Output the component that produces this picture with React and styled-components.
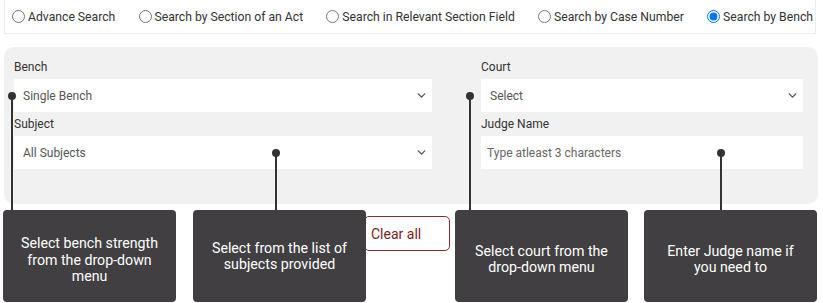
import React from "react";
import styled, { createGlobalStyle } from "styled-components";
import { ChevronDown } from "lucide-react";

const GlobalStyle = createGlobalStyle`
  body {
    margin: 0;
    background: #ffffff;
    font-family: Roboto, "Liberation Sans", sans-serif;
  }
`;

const Page = styled.div`
  position: relative;
  width: 823px;
  height: 303px;
  overflow: hidden;
`;

const RadioBar = styled.div`
  display: flex;
  justify-content: space-between;
  align-items: center;
  height: 33px;
  margin: 0 7px 0 4px;
  padding: 0 2px 0 7px;
  border: 1px solid #ececec;
  border-top: none;
`;

const RadioLabel = styled.label`
  display: flex;
  align-items: center;
  font-size: 12.2px;
  color: #333333;
  white-space: nowrap;
`;

const Radio = styled.input`
  width: 13px;
  height: 13px;
  margin: 0 3px 0 0;
`;

const Panel = styled.div`
  display: grid;
  grid-template-columns: 418px 322px;
  column-gap: 49px;
  row-gap: 5px;
  margin: 13px 5px 0 4px;
  padding: 13px 15px 35px 10px;
  background: #f1f1f1;
  border-radius: 10px;
`;

const Field = styled.div`
  display: flex;
  flex-direction: column;
  gap: 5px;
`;

const Label = styled.div`
  font-size: 12px;
  line-height: 14px;
  color: #333333;
`;

const SelectBox = styled.div`
  display: flex;
  align-items: center;
  justify-content: space-between;
  height: 33px;
  padding: 0 4px 0 9px;
  background: #ffffff;
  font-size: 12px;
  color: #555555;

  svg {
    color: #555555;
  }
`;

const TextBox = styled.div`
  display: flex;
  align-items: center;
  height: 33px;
  padding: 0 6px;
  background: #ffffff;
  font-size: 12px;
  color: #666666;
`;

const ButtonRow = styled.div`
  display: flex;
  margin-top: 12px;
  padding-left: 364px;
`;

const ClearButton = styled.button`
  width: 86px;
  height: 35px;
  padding: 0 0 0 6px;
  text-align: left;
  background: #ffffff;
  border: 1px solid #8b2a2a;
  border-radius: 5px;
  font-family: Roboto, "Liberation Sans", sans-serif;
  font-size: 14px;
  color: #7b1e22;
`;

const Overlay = styled.div`
  position: absolute;
  inset: 0;
  pointer-events: none;
`;

const Stem = styled.div`
  position: absolute;
  left: ${(p) => p.$x - 1}px;
  top: ${(p) => p.$y}px;
  width: 2px;
  height: ${(p) => 210 - p.$y}px;
  background: #333333;
`;

const Dot = styled.div`
  position: absolute;
  left: ${(p) => p.$x - 4}px;
  top: ${(p) => p.$y - 4}px;
  width: 8px;
  height: 8px;
  border-radius: 50%;
  background: #333333;
`;

const Tip = styled.div`
  position: absolute;
  left: ${(p) => p.$x}px;
  top: 210px;
  width: 173px;
  height: 92px;
  box-sizing: border-box;
  display: flex;
  align-items: center;
  justify-content: center;
  padding: ${(p) => p.$pad}px 16px 0;
  background: #413f41;
  border-radius: 4px;
  color: #ffffff;
  font-size: 14.2px;
  line-height: 16.5px;
  text-align: center;
`;

const radios = [
  "Advance Search",
  "Search by Section of an Act",
  "Search in Relevant Section Field",
  "Search by Case Number",
  "Search by Bench",
];

const callouts = [
  { box: 3, x: 12, y: 96, pad: 8, text: "Select bench strength from the drop-down menu" },
  { box: 193, x: 276, y: 153, pad: 0, text: "Select from the list of subjects provided" },
  { box: 455, x: 470, y: 96, pad: 6, text: "Select court from the drop-down menu" },
  { box: 644, x: 721, y: 153, pad: 6, text: "Enter Judge name if you need to" },
];

function Select({ value }) {
  return (
    <SelectBox>
      <span>{value}</span>
      <ChevronDown size={13} strokeWidth={2.6} />
    </SelectBox>
  );
}

export default function App() {
  return (
    <Page>
      <GlobalStyle />
      <RadioBar>
        {radios.map((r) => (
          <RadioLabel key={r}>
            <Radio type="radio" name="mode" readOnly checked={r === "Search by Bench"} />
            {r}
          </RadioLabel>
        ))}
      </RadioBar>

      <Panel>
        <Field>
          <Label>Bench</Label>
          <Select value="Single Bench" />
        </Field>
        <Field>
          <Label>Court</Label>
          <Select value="Select" />
        </Field>
        <Field>
          <Label>Subject</Label>
          <Select value="All Subjects" />
        </Field>
        <Field>
          <Label>Judge Name</Label>
          <TextBox>Type atleast 3 characters</TextBox>
        </Field>
      </Panel>

      <ButtonRow>
        <ClearButton>Clear all</ClearButton>
      </ButtonRow>

      <Overlay>
        {callouts.map((c) => (
          <React.Fragment key={c.box}>
            <Stem $x={c.x} $y={c.y} />
            <Dot $x={c.x} $y={c.y} />
            <Tip $x={c.box} $pad={c.pad}>{c.text}</Tip>
          </React.Fragment>
        ))}
      </Overlay>
    </Page>
  );
}
